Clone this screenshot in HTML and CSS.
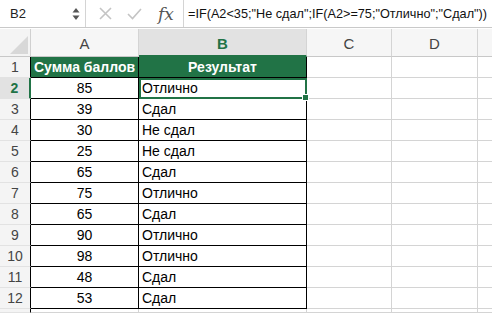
FILE: index.html
```html
<!DOCTYPE html>
<html>
<head>
<meta charset="utf-8">
<link rel="stylesheet" href="styles.css">
</head>
<body>
<div class="bar">
  <div class="namebox">
    <span class="name">B2</span>
    <svg class="spin" width="8" height="16" viewBox="0 0 8 16"><path d="M4 2 L7.5 6.5 L0.5 6.5 Z" fill="#555"/><path d="M4 14 L7.5 9.5 L0.5 9.5 Z" fill="#555"/></svg>
  </div>
  <div class="tools">
    <svg width="15" height="15" viewBox="0 0 15 15"><path d="M2 2 L13 13 M13 2 L2 13" stroke="#c4c4c4" stroke-width="1.6"/></svg>
    <svg width="17" height="15" viewBox="0 0 17 15"><path d="M2 8 L6.5 12.5 L15 3" stroke="#c4c4c4" stroke-width="1.6" fill="none"/></svg>
    <span class="fx">fx</span>
  </div>
  <div class="formula">=IF(A2&lt;35;"Не сдал";IF(A2&gt;=75;"Отлично";"Сдал"))</div>
</div>
<div class="sheet">
  <div class="corner"><svg width="22" height="22" viewBox="0 0 22 22"><path d="M22 4 L22 22 L4 22 Z" fill="#d8d8d8"/></svg></div>
  <div class="ch">A</div>
  <div class="ch sel">B</div>
  <div class="ch">C</div>
  <div class="ch">D</div>
  <div class="ch last"></div>

  <div class="rh">1</div>
  <div class="c t th">Сумма баллов</div>
  <div class="c t th b">Результат</div>
  <div class="c"></div><div class="c"></div><div class="c last"></div>

  <div class="rh rsel">2</div>
  <div class="c t num">85</div>
  <div class="c t txt active">Отлично<span class="handle"></span></div>
  <div class="c"></div><div class="c"></div><div class="c last"></div>

  <div class="rh">3</div>
  <div class="c t num">39</div>
  <div class="c t txt b">Сдал</div>
  <div class="c"></div><div class="c"></div><div class="c last"></div>

  <div class="rh">4</div>
  <div class="c t num">30</div>
  <div class="c t txt b">Не сдал</div>
  <div class="c"></div><div class="c"></div><div class="c last"></div>

  <div class="rh">5</div>
  <div class="c t num">25</div>
  <div class="c t txt b">Не сдал</div>
  <div class="c"></div><div class="c"></div><div class="c last"></div>

  <div class="rh">6</div>
  <div class="c t num">65</div>
  <div class="c t txt b">Сдал</div>
  <div class="c"></div><div class="c"></div><div class="c last"></div>

  <div class="rh">7</div>
  <div class="c t num">75</div>
  <div class="c t txt b">Отлично</div>
  <div class="c"></div><div class="c"></div><div class="c last"></div>

  <div class="rh">8</div>
  <div class="c t num">65</div>
  <div class="c t txt b">Сдал</div>
  <div class="c"></div><div class="c"></div><div class="c last"></div>

  <div class="rh">9</div>
  <div class="c t num">90</div>
  <div class="c t txt b">Отлично</div>
  <div class="c"></div><div class="c"></div><div class="c last"></div>

  <div class="rh">10</div>
  <div class="c t num">98</div>
  <div class="c t txt b">Отлично</div>
  <div class="c"></div><div class="c"></div><div class="c last"></div>

  <div class="rh">11</div>
  <div class="c t num">48</div>
  <div class="c t txt b">Сдал</div>
  <div class="c"></div><div class="c"></div><div class="c last"></div>

  <div class="rh">12</div>
  <div class="c t num">53</div>
  <div class="c t txt b">Сдал</div>
  <div class="c"></div><div class="c"></div><div class="c last"></div>

  <div class="rh"></div>
  <div class="c"></div><div class="c"></div><div class="c"></div><div class="c"></div><div class="c last"></div>
</div>
</body>
</html>
```
FILE: styles.css
```css
html, body {
  margin: 0;
  padding: 0;
  background: #ffffff;
  width: 492px;
  height: 313px;
  overflow: hidden;
  font-family: "Liberation Sans", Arial, sans-serif;
}
.bar {
  display: flex;
  height: 28px;
  box-sizing: border-box;
  border-bottom: 1px solid #c9c9c9;
  align-items: stretch;
}
.namebox {
  width: 86px;
  box-sizing: border-box;
  border-right: 1px solid #d4d4d4;
  display: flex;
  align-items: center;
  padding-left: 10px;
  padding-right: 5px;
}
.name {
  flex: 1;
  font-size: 13px;
  color: #222;
}
.spin { display: block; }
.tools {
  width: 98px;
  box-sizing: border-box;
  border-right: 1px solid #d4d4d4;
  display: flex;
  align-items: center;
  gap: 13px;
  padding-left: 12px;
}
.fx {
  font-family: "DejaVu Serif", "Liberation Serif", serif;
  font-style: italic;
  font-size: 17px;
  color: #555;
  margin-left: 2px;
}
.formula {
  flex: 1;
  display: flex;
  align-items: center;
  padding-left: 4px;
  font-size: 12.7px;
  color: #111;
  white-space: nowrap;
  overflow: hidden;
}
.sheet {
  display: grid;
  grid-template-columns: 31px 108px 168px 85px 86px 14px;
  grid-template-rows: 28px repeat(12, 21px) 4px;
  margin-top: 1px;
}
.sheet > div {
  box-sizing: border-box;
  position: relative;
}
.corner {
  background: #f4f4f4;
  border-right: 1px solid #d0d0d0;
  border-bottom: 1px solid #c8c8c8;
  display: flex;
  align-items: flex-end;
  justify-content: flex-end;
  padding: 0 2px 2px 0;
}
.corner svg { display: block; }
.ch {
  background: #f6f6f6;
  border-right: 1px solid #d4d4d4;
  border-bottom: 1px solid #c8c8c8;
  display: flex;
  align-items: center;
  justify-content: center;
  font-size: 15px;
  color: #444;
  padding-top: 2px;
}
.ch.sel {
  background: #e2e2e2;
  color: #217346;
  font-weight: bold;
  border-bottom: 2px solid #217346;
}
.ch.last { border-right: none; }
.rh {
  background: #f4f4f4;
  border-right: 1px solid #000;
  border-bottom: 1px solid #e2e2e2;
  display: flex;
  align-items: center;
  justify-content: center;
  font-size: 14px;
  color: #444;
}
.rh.rsel {
  background: #e2e2e2;
  color: #217346;
  font-weight: bold;
  border-right: 2px solid #217346;
}
.c {
  border-right: 1px solid #d4d4d4;
  border-bottom: 1px solid #d4d4d4;
  font-size: 14px;
  color: #000;
  display: flex;
  align-items: center;
  white-space: nowrap;
}
.c.last { border-right: none; }
.c.t {
  border-bottom: 1px solid #000;
  border-right: 1px solid #000;
}
.th {
  background: #217346;
  color: #fff;
  font-weight: bold;
  justify-content: center;
}
.num { justify-content: center; }
.txt { padding-left: 3px; }
.active {
  border-right: 2px solid #217346 !important;
  border-bottom: 2px solid #217346 !important;
  box-shadow: inset 0 2px 0 #217346, inset 2px 0 0 #217346;
  padding-left: 3px;
}
.handle {
  position: absolute;
  right: -4px;
  bottom: -4px;
  width: 5px;
  height: 5px;
  background: #217346;
  border: 1px solid #fff;
  z-index: 2;
}
```
